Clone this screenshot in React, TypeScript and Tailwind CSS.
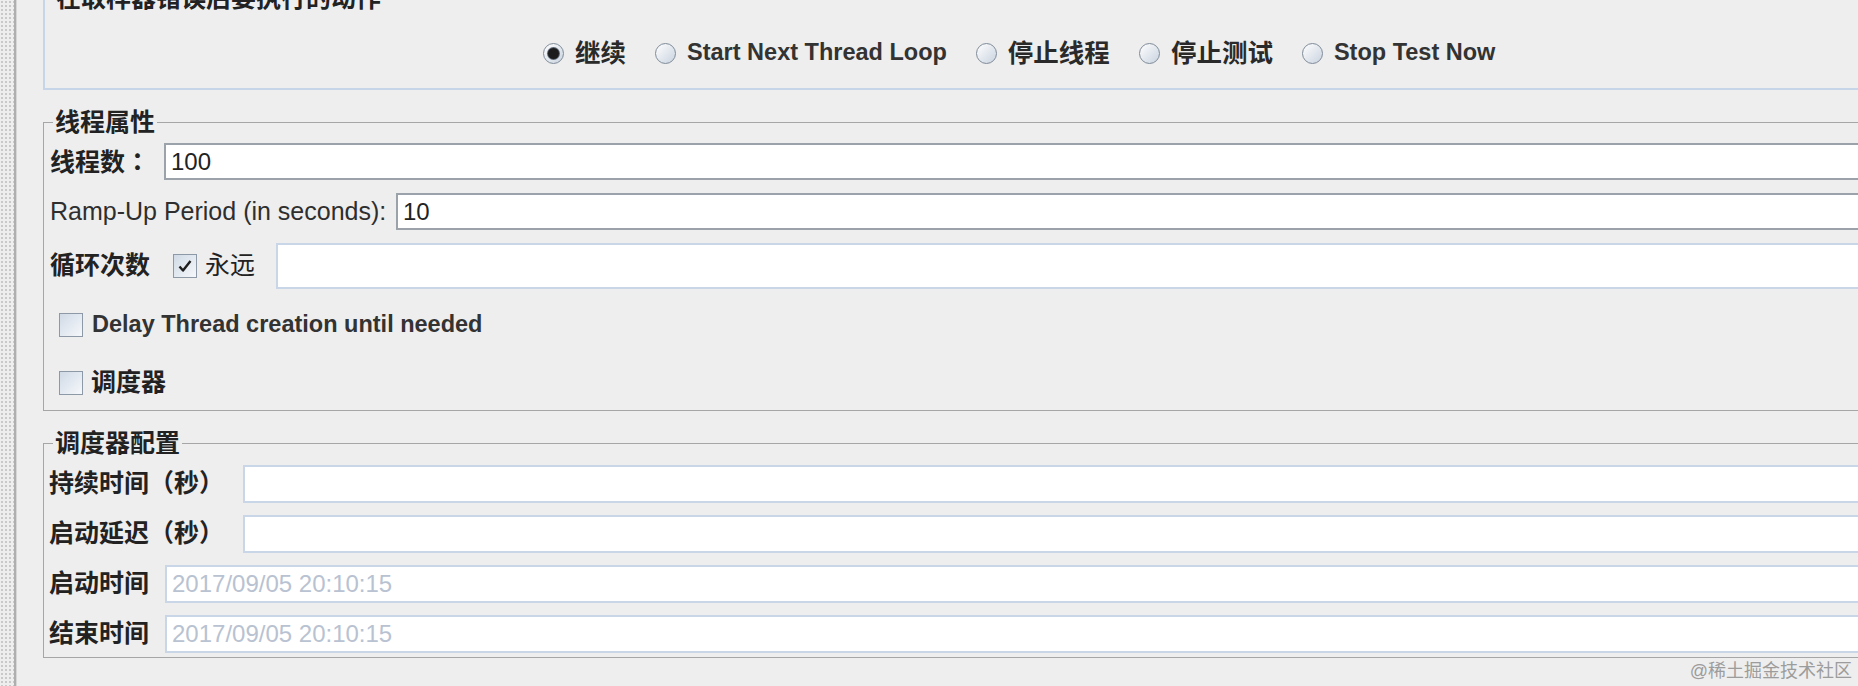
import React from 'react';

function Radio({ checked, label, cjk }: { checked?: boolean; label: string; cjk?: boolean }) {
  return (
    <div className="flex items-center gap-[11px]">
      <span className="w-[21px] h-[21px] rounded-full border border-[#7f8b99] bg-gradient-to-br from-white to-[#c9d3df] flex items-center justify-center">
        {checked && <span className="w-[11px] h-[11px] rounded-full bg-[#1c1c1c] ring-1 ring-[#5a6470]" />}
      </span>
      <span className={cjk ? 'text-[25.5px] font-bold text-[#2a2a2a]' : 'text-[23.5px] font-bold text-[#333]'}>{label}</span>
    </div>
  );
}

function Check({ checked }: { checked?: boolean }) {
  return (
    <span className="w-[24px] h-[24px] shrink-0 border border-[#8e99a7] bg-gradient-to-br from-[#d0dae6] to-[#f6f8fb] flex items-center justify-center">
      {checked && (
        <svg width="16" height="16" viewBox="0 0 16 16">
          <path d="M2.5 8.5 L6 12.5 L13.5 3" fill="none" stroke="#1e1e1e" strokeWidth="2.4" strokeLinejoin="round" />
        </svg>
      )}
    </span>
  );
}

function Field({ value, dark, muted }: { value?: string; dark?: boolean; muted?: boolean }) {
  return (
    <div
      className={`flex-1 h-full bg-white border-2 flex items-center pl-[5px] text-[24px] ${
        dark ? 'border-[#9ba2a9]' : 'border-[#c9d6e8]'
      } ${muted ? 'text-[#b8c2d1]' : 'text-[#222]'}`}
    >
      {value}
    </div>
  );
}

function Legend({ children }: { children: React.ReactNode }) {
  return <legend className="ml-[9px] px-[2px] text-[25px] leading-[30px] font-bold text-[#222]">{children}</legend>;
}

export default function App() {
  return (
    <div className="w-[1858px] h-[686px] overflow-hidden bg-[#eeeeee] flex font-['Liberation_Sans','Noto_Sans_CJK_SC',sans-serif]">
      {/* splitter strip */}
      <div className="w-[14px] h-full bg-[radial-gradient(circle,#c9c9c9_1px,transparent_1.2px)] bg-[length:4px_4px]" />
      <div className="w-[2px] h-full bg-[#aeaeae]" />
      <div className="w-[1px] h-full bg-[#d6d6d6]" />

      <div className="flex-1 flex flex-col ml-[26px] mr-[-30px]">
        {/* action after sampler error */}
        <fieldset className="mt-[-17px] border-2 border-[#c6d5e7]">
          <Legend>在取样器错误后要执行的动作</Legend>
          <div className="pt-[25px] pb-[20px] pl-[498px]">
            <div className="h-[30px] flex items-center gap-[29px]">
              <Radio checked label="继续" cjk />
              <Radio label="Start Next Thread Loop" />
              <Radio label="停止线程" cjk />
              <Radio label="停止测试" cjk />
              <Radio label="Stop Test Now" />
            </div>
          </div>
        </fieldset>

        {/* thread properties */}
        <fieldset className="mt-[17px] border border-[#a6a6a6]">
          <Legend>线程属性</Legend>
          <div className="pl-[6px] pt-[6px] pb-[12px] flex flex-col">
            <div className="h-[37px] flex items-center">
              <span className="w-[114px] text-[25px] font-bold text-[#222]">
                线程数<span className="font-['Noto_Sans_CJK_TC']">：</span>
              </span>
              <Field value="100" dark />
            </div>
            <div className="mt-[13px] h-[37px] flex items-center">
              <span className="w-[346px] text-[25px] text-[#2e2e2e]">Ramp-Up Period (in seconds):</span>
              <Field value="10" dark />
            </div>
            <div className="mt-[13px] h-[46px] flex items-center">
              <span className="w-[123px] text-[25px] font-bold text-[#222]">循环次数</span>
              <Check checked />
              <span className="ml-[8px] w-[71px] text-[25px] text-[#222]">永远</span>
              <Field />
            </div>
            <div className="mt-[21px] h-[30px] flex items-center pl-[9px] gap-[9px]">
              <Check />
              <span className="text-[23.5px] font-bold text-[#333]">Delay Thread creation until needed</span>
            </div>
            <div className="mt-[28px] h-[30px] flex items-center pl-[9px] gap-[8px]">
              <Check />
              <span className="text-[25px] font-bold text-[#222]">调度器</span>
            </div>
          </div>
        </fieldset>

        {/* scheduler config */}
        <fieldset className="mt-[17px] border border-[#a6a6a6]">
          <Legend>调度器配置</Legend>
          <div className="pl-[5px] pt-[7px] pb-[4px] flex flex-col gap-[12px]">
            <div className="h-[38px] flex items-center">
              <span className="w-[194px] text-[25px] font-bold text-[#222]">持续时间（秒）</span>
              <Field />
            </div>
            <div className="h-[38px] flex items-center">
              <span className="w-[194px] text-[25px] font-bold text-[#222]">启动延迟（秒）</span>
              <Field />
            </div>
            <div className="h-[38px] flex items-center">
              <span className="w-[116px] text-[25px] font-bold text-[#222]">启动时间</span>
              <Field value="2017/09/05 20:10:15" muted />
            </div>
            <div className="h-[38px] flex items-center">
              <span className="w-[116px] text-[25px] font-bold text-[#222]">结束时间</span>
              <Field value="2017/09/05 20:10:15" muted />
            </div>
          </div>
        </fieldset>

        <div className="h-[26px] flex items-center justify-end pr-[36px] text-[18px] text-[#9c9c9c]">@稀土掘金技术社区</div>
      </div>
    </div>
  );
}
